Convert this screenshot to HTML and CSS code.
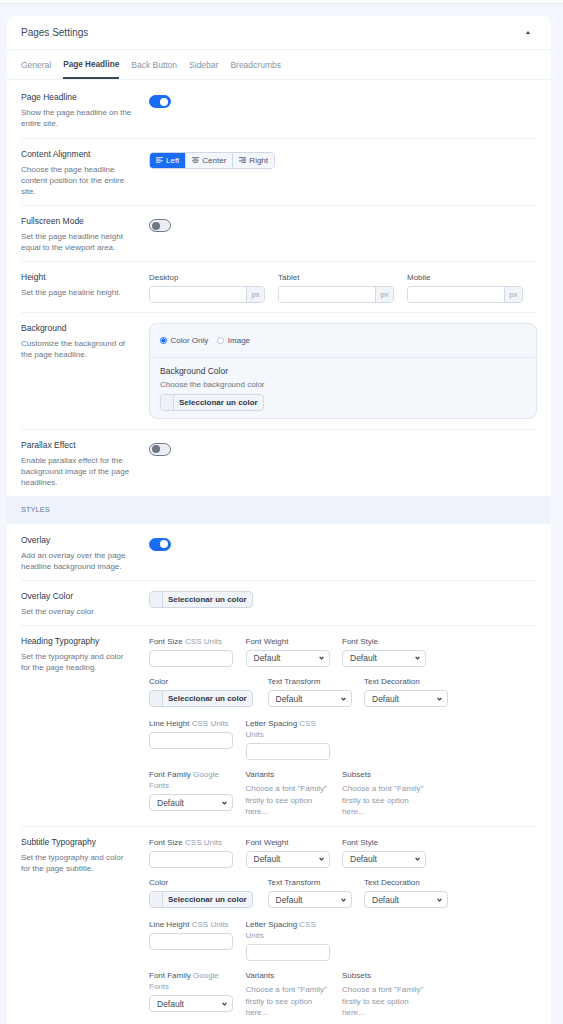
FILE: index.html
```html
<!DOCTYPE html>
<html lang="en">
<head>
    <meta charset="UTF-8">
    <meta name="viewport" content="width=device-width, initial-scale=1.0">
    <title>Pages Settings</title>
    <link rel="stylesheet" href="styles.css">
</head>
<body>
    <div class="topbar"></div>
    <div class="card">
        <div class="card-head">
            <span>Pages Settings</span>
            <span class="caret"></span>
        </div>
        <nav class="tabs">
            <a class="tab">General</a>
            <a class="tab active">Page Headline</a>
            <a class="tab">Back Button</a>
            <a class="tab">Sidebar</a>
            <a class="tab">Breadcrumbs</a>
        </nav>

        <div class="section">
            <div class="row first">
                <div class="info">
                    <div class="label">Page Headline</div>
                    <div class="desc">Show the page headline on the entire site.</div>
                </div>
                <div class="control"><span class="switch on"></span></div>
            </div>

            <div class="row">
                <div class="info">
                    <div class="label">Content Alignment</div>
                    <div class="desc">Choose the page headline content position for the entire site.</div>
                </div>
                <div class="control">
                    <div class="seg">
                        <span class="seg-btn active">
                            <svg width="7" height="6" viewBox="0 0 7 6"><path d="M0 .6h7M0 2.2h4.5M0 3.8h7M0 5.4h4.5" stroke="currentColor" stroke-width=".8"/></svg>
                            Left
                        </span>
                        <span class="seg-btn">
                            <svg width="7" height="6" viewBox="0 0 7 6"><path d="M0 .6h7M1.25 2.2h4.5M0 3.8h7M1.25 5.4h4.5" stroke="currentColor" stroke-width=".8"/></svg>
                            Center
                        </span>
                        <span class="seg-btn">
                            <svg width="7" height="6" viewBox="0 0 7 6"><path d="M0 .6h7M2.5 2.2h4.5M0 3.8h7M2.5 5.4h4.5" stroke="currentColor" stroke-width=".8"/></svg>
                            Right
                        </span>
                    </div>
                </div>
            </div>

            <div class="row">
                <div class="info">
                    <div class="label">Fullscreen Mode</div>
                    <div class="desc">Set the page headline height equal to the viewport area.</div>
                </div>
                <div class="control"><span class="switch"></span></div>
            </div>

            <div class="row">
                <div class="info">
                    <div class="label">Height</div>
                    <div class="desc">Set the page healine height.</div>
                </div>
                <div class="control sizes">
                    <div class="size-field">
                        <div class="field-label">Desktop</div>
                        <div class="input-group"><input type="text"><span class="addon">px</span></div>
                    </div>
                    <div class="size-field">
                        <div class="field-label">Tablet</div>
                        <div class="input-group"><input type="text"><span class="addon">px</span></div>
                    </div>
                    <div class="size-field">
                        <div class="field-label">Mobile</div>
                        <div class="input-group"><input type="text"><span class="addon">px</span></div>
                    </div>
                </div>
            </div>

            <div class="row">
                <div class="info">
                    <div class="label">Background</div>
                    <div class="desc">Customize the background of the page headline.</div>
                </div>
                <div class="control">
                    <div class="bg-panel">
                        <div class="radio-row">
                            <label class="radio-item"><span class="radio checked"></span>Color Only</label>
                            <label class="radio-item"><span class="radio"></span>Image</label>
                        </div>
                        <div class="bg-color">
                            <div class="label">Background Color</div>
                            <div class="desc tight">Choose the background color</div>
                            <div class="color-btn"><span class="swatch"></span><span class="color-text">Seleccionar un color</span></div>
                        </div>
                    </div>
                </div>
            </div>

            <div class="row">
                <div class="info">
                    <div class="label">Parallax Effect</div>
                    <div class="desc">Enable parallax effect for the background image of the page headlines.</div>
                </div>
                <div class="control"><span class="switch"></span></div>
            </div>
        </div>

        <div class="band">Styles</div>

        <div class="section">
            <div class="row first-styles">
                <div class="info">
                    <div class="label">Overlay</div>
                    <div class="desc">Add an overlay over the page headline background image.</div>
                </div>
                <div class="control"><span class="switch on"></span></div>
            </div>

            <div class="row">
                <div class="info">
                    <div class="label">Overlay Color</div>
                    <div class="desc">Set the overlay color.</div>
                </div>
                <div class="control">
                    <div class="color-btn"><span class="swatch"></span><span class="color-text">Seleccionar un color</span></div>
                </div>
            </div>

            <div class="row">
                <div class="info">
                    <div class="label">Heading Typography</div>
                    <div class="desc">Set the typography and color for the page heading.</div>
                </div>
                <div class="control typo">
                    <div class="typo-row">
                        <div class="field">
                            <div class="field-label">Font Size <span class="unit">CSS Units</span></div>
                            <input class="text-input" type="text">
                        </div>
                        <div class="field">
                            <div class="field-label">Font Weight</div>
                            <select><option>Default</option></select>
                        </div>
                        <div class="field">
                            <div class="field-label">Font Style</div>
                            <select><option>Default</option></select>
                        </div>
                    </div>
                    <div class="typo-row">
                        <div class="field wide">
                            <div class="field-label">Color</div>
                            <div class="color-btn"><span class="swatch"></span><span class="color-text">Seleccionar un color</span></div>
                        </div>
                        <div class="field">
                            <div class="field-label">Text Transform</div>
                            <select><option>Default</option></select>
                        </div>
                        <div class="field">
                            <div class="field-label">Text Decoration</div>
                            <select><option>Default</option></select>
                        </div>
                    </div>
                    <div class="typo-row">
                        <div class="field">
                            <div class="field-label">Line Height <span class="unit">CSS Units</span></div>
                            <input class="text-input" type="text">
                        </div>
                        <div class="field">
                            <div class="field-label">Letter Spacing <span class="unit">CSS Units</span></div>
                            <input class="text-input" type="text">
                        </div>
                    </div>
                    <div class="typo-row">
                        <div class="field">
                            <div class="field-label">Font Family <span class="unit">Google Fonts</span></div>
                            <select><option>Default</option></select>
                        </div>
                        <div class="field">
                            <div class="field-label">Variants</div>
                            <div class="help">Choose a font "Family" firstly to see option here...</div>
                        </div>
                        <div class="field">
                            <div class="field-label">Subsets</div>
                            <div class="help">Choose a font "Family" firstly to see option here...</div>
                        </div>
                    </div>
                </div>
            </div>

            <div class="row">
                <div class="info">
                    <div class="label">Subtitle Typography</div>
                    <div class="desc">Set the typography and color for the page subtitle.</div>
                </div>
                <div class="control typo">
                    <div class="typo-row">
                        <div class="field">
                            <div class="field-label">Font Size <span class="unit">CSS Units</span></div>
                            <input class="text-input" type="text">
                        </div>
                        <div class="field">
                            <div class="field-label">Font Weight</div>
                            <select><option>Default</option></select>
                        </div>
                        <div class="field">
                            <div class="field-label">Font Style</div>
                            <select><option>Default</option></select>
                        </div>
                    </div>
                    <div class="typo-row">
                        <div class="field wide">
                            <div class="field-label">Color</div>
                            <div class="color-btn"><span class="swatch"></span><span class="color-text">Seleccionar un color</span></div>
                        </div>
                        <div class="field">
                            <div class="field-label">Text Transform</div>
                            <select><option>Default</option></select>
                        </div>
                        <div class="field">
                            <div class="field-label">Text Decoration</div>
                            <select><option>Default</option></select>
                        </div>
                    </div>
                    <div class="typo-row">
                        <div class="field">
                            <div class="field-label">Line Height <span class="unit">CSS Units</span></div>
                            <input class="text-input" type="text">
                        </div>
                        <div class="field">
                            <div class="field-label">Letter Spacing <span class="unit">CSS Units</span></div>
                            <input class="text-input" type="text">
                        </div>
                    </div>
                    <div class="typo-row">
                        <div class="field">
                            <div class="field-label">Font Family <span class="unit">Google Fonts</span></div>
                            <select><option>Default</option></select>
                        </div>
                        <div class="field">
                            <div class="field-label">Variants</div>
                            <div class="help">Choose a font "Family" firstly to see option here...</div>
                        </div>
                        <div class="field">
                            <div class="field-label">Subsets</div>
                            <div class="help">Choose a font "Family" firstly to see option here...</div>
                        </div>
                    </div>
                </div>
            </div>
        </div>
    </div>
</body>
</html>
```

FILE: styles.css
```css
* {
    box-sizing: border-box;
}
body {
    margin: 0;
    background: #f3f6fc;
    font-family: "Liberation Sans", Arial, sans-serif;
    color: #3b4858;
}
.topbar {
    height: 4px;
    background: #fff;
    border-bottom: 1px solid #e4e9f2;
}
.card {
    margin: 12px 12px 0 7px;
    background: #fff;
    border-radius: 8px 8px 0 0;
}
.card-head {
    height: 34px;
    display: flex;
    align-items: center;
    justify-content: space-between;
    padding: 0 21px 0 14px;
    border-bottom: 1px solid #eef1f6;
    font-size: 10px;
    color: #3b4858;
}
.caret {
    width: 0;
    height: 0;
    border-left: 2.5px solid transparent;
    border-right: 2.5px solid transparent;
    border-bottom: 3.5px solid #2f3b4c;
}
.tabs {
    display: flex;
    gap: 12px;
    height: 30px;
    padding: 0 14px;
    border-bottom: 1px solid #eef1f6;
}
.tab {
    display: flex;
    align-items: center;
    font-size: 8.5px;
    color: #8b95a5;
    border-bottom: 2px solid transparent;
    padding-top: 2px;
}
.tab.active {
    color: #3b4756;
    font-weight: bold;
    font-size: 8.2px;
    border-bottom-color: #3b4b5b;
}
.section {
    padding: 0 14px;
}
.row {
    display: grid;
    grid-template-columns: 112px 1fr;
    column-gap: 16px;
    padding: 10px 0 8px;
    border-top: 1px solid #eef1f6;
}
.row.first {
    border-top: 0;
    padding: 12px 0 9px;
}
.row.first-styles {
    border-top: 0;
    padding-top: 11px;
}
.label {
    font-size: 8.5px;
    line-height: 11px;
    color: #2f3b4c;
}
.desc {
    font-size: 8px;
    line-height: 11px;
    color: #6b7685;
    margin-top: 4px;
}
.desc.tight {
    margin-top: 2px;
    line-height: 11.5px;
}
.switch {
    display: block;
    position: relative;
    width: 22px;
    height: 13px;
    margin-top: 3px;
    border-radius: 7px;
    background: #e9ecf1;
    border: 1px solid #707987;
}
.switch::after {
    content: "";
    position: absolute;
    top: 1.5px;
    left: 2px;
    width: 8px;
    height: 8px;
    border-radius: 50%;
    background: #6f7784;
}
.switch.on {
    background: #1a6cf2;
    border-color: #1a6cf2;
}
.switch.on::after {
    left: auto;
    right: 2px;
    background: #fff;
}
.seg {
    display: inline-flex;
    height: 17px;
    border: 1px solid #cfd8e4;
    border-radius: 4px;
    overflow: hidden;
}
.seg-btn {
    display: flex;
    align-items: center;
    gap: 3px;
    padding: 0 6px;
    font-size: 8px;
    color: #4a5568;
    background: #f3f6fb;
    border-left: 1px solid #cfd8e4;
}
.seg-btn:first-child {
    border-left: 0;
}
.seg-btn.active {
    background: #1a6cf2;
    color: #fff;
}
.sizes {
    display: flex;
    gap: 13px;
    margin-bottom: 1px;
}
.size-field {
    width: 116px;
}
.field-label {
    font-size: 8px;
    line-height: 11px;
    color: #4a5568;
    margin-bottom: 3px;
}
.unit {
    color: #8fa0b5;
}
.input-group {
    display: flex;
    height: 17px;
    border: 1px solid #d3dae4;
    border-radius: 4px;
    overflow: hidden;
}
.input-group input {
    flex: 1;
    min-width: 0;
    border: 0;
    outline: 0;
}
.addon {
    width: 18px;
    display: flex;
    align-items: center;
    justify-content: center;
    font-size: 7.5px;
    color: #9aa5b4;
    background: #f1f4f8;
    border-left: 1px solid #d3dae4;
}
.bg-panel {
    border: 1px solid #dfe6f0;
    border-radius: 8px;
    background: #f4f7fc;
    margin-bottom: 2px;
}
.radio-row {
    display: flex;
    gap: 9px;
    padding: 11px 10px;
    border-bottom: 1px solid #e3e9f2;
}
.radio-item {
    display: flex;
    align-items: center;
    gap: 3.5px;
    font-size: 8px;
    line-height: 11px;
    color: #4a5568;
}
.radio {
    width: 7px;
    height: 7px;
    border: 1px solid #b7c2d1;
    border-radius: 50%;
    background: #fff;
}
.radio.checked {
    border-color: #1a6cf2;
    background: radial-gradient(circle, #1a6cf2 0 1.8px, #fff 2.3px);
}
.bg-color {
    padding: 8px 10px 7px;
}
.bg-color .color-btn {
    margin-top: 3px;
}
.color-btn {
    display: inline-flex;
    vertical-align: top;
    height: 17px;
    border: 1px solid #d0d8e2;
    border-radius: 4px;
    background: #f1f4f8;
    overflow: hidden;
}
.swatch {
    width: 13px;
    background: #eef2f7;
    border-right: 1px solid #d0d8e2;
}
.color-text {
    padding: 0 5px;
    font-size: 8px;
    line-height: 15px;
    font-weight: bold;
    color: #2d3748;
}
.band {
    height: 28px;
    display: flex;
    align-items: center;
    padding: 0 14px;
    background: #eef3fb;
    font-size: 7.5px;
    text-transform: uppercase;
    color: #5b7fa6;
}
.typo {
    display: flex;
    flex-direction: column;
    gap: 9.5px;
}
.typo-row {
    display: flex;
    gap: 12.5px;
    align-items: flex-start;
}
.field {
    width: 84px;
}
.field.wide {
    width: 106px;
}
.text-input {
    display: block;
    width: 100%;
    height: 17px;
    border: 1px solid #d3dae4;
    border-radius: 4px;
    background: #fff;
}
select {
    display: block;
    width: 100%;
    height: 17px;
    padding: 0 12px 0 7px;
    border: 1px solid #d3dae4;
    border-radius: 4px;
    appearance: none;
    background: #fff url("data:image/svg+xml,%3Csvg xmlns='http://www.w3.org/2000/svg' width='5' height='4' viewBox='0 0 5 4'%3E%3Cpath d='M.6 1 2.5 3 4.4 1' fill='none' stroke='%23333c48' stroke-width='1.2'/%3E%3C/svg%3E") no-repeat right 5px center;
    font-family: inherit;
    font-size: 8.5px;
    color: #3d4a5c;
}
.help {
    font-size: 8px;
    line-height: 11.5px;
    color: #8f9aab;
    margin-top: 0.5px;
}
```
